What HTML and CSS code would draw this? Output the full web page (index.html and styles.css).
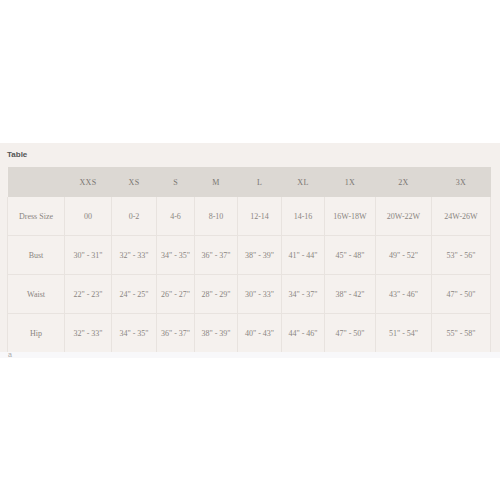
FILE: index.html
```html
<!DOCTYPE html>
<html>
<head>
<meta charset="utf-8">
<link rel="stylesheet" href="styles.css">
</head>
<body>
<div class="top"></div>
<section class="panel">
  <div class="label">Table</div>
  <table class="sizes">
    <colgroup>
      <col class="c0"><col class="c1"><col class="c2"><col class="c3"><col class="c4"><col class="c5"><col class="c6"><col class="c7"><col class="c8"><col class="c9">
    </colgroup>
    <thead>
      <tr><th></th><th>XXS</th><th>XS</th><th>S</th><th>M</th><th>L</th><th>XL</th><th>1X</th><th>2X</th><th>3X</th></tr>
    </thead>
    <tbody>
      <tr><td>Dress Size</td><td>00</td><td>0-2</td><td>4-6</td><td>8-10</td><td>12-14</td><td>14-16</td><td>16W-18W</td><td>20W-22W</td><td>24W-26W</td></tr>
      <tr><td>Bust</td><td>30" - 31"</td><td>32" - 33"</td><td>34" - 35"</td><td>36" - 37"</td><td>38" - 39"</td><td>41" - 44"</td><td>45" - 48"</td><td>49" - 52"</td><td>53" - 56"</td></tr>
      <tr><td>Waist</td><td>22" - 23"</td><td>24" - 25"</td><td>26" - 27"</td><td>28" - 29"</td><td>30" - 33"</td><td>34" - 37"</td><td>38" - 42"</td><td>43" - 46"</td><td>47" - 50"</td></tr>
      <tr><td>Hip</td><td>32" - 33"</td><td>34" - 35"</td><td>36" - 37"</td><td>38" - 39"</td><td>40" - 43"</td><td>44" - 46"</td><td>47" - 50"</td><td>51" - 54"</td><td>55" - 58"</td></tr>
    </tbody>
  </table>
</section>
<div class="after">a</div>
</body>
</html>
```

FILE: styles.css
```css
html, body {
  margin: 0;
  padding: 0;
  background: #ffffff;
}
.top {
  height: 143px;
}
.panel {
  background: #f4f0ed;
  padding: 7px 10px 1px 7px;
  height: 201px;
}
.label {
  font-family: "Liberation Sans", Arial, sans-serif;
  font-weight: bold;
  font-size: 8px;
  color: #555;
  line-height: 10px;
  margin-bottom: 7px;
}
.sizes {
  border-collapse: collapse;
  table-layout: fixed;
  width: 483px;
  font-family: "Liberation Serif", "Times New Roman", serif;
  font-size: 8px;
  color: #8a8581;
  background: #f5f1ee;
}
.c0 { width: 57px; }
.c1 { width: 47px; }
.c2 { width: 45px; }
.c3 { width: 38px; }
.c4 { width: 43px; }
.c5 { width: 44px; }
.c6 { width: 43px; }
.c7 { width: 51px; }
.c8 { width: 56px; }
.c9 { width: 59px; }
.sizes th {
  background: #dcd8d3;
  height: 30px;
  padding: 0;
  font-weight: normal;
  color: #7a7672;
  letter-spacing: 0.3px;
  text-align: center;
}
.sizes td {
  height: 38px;
  padding: 0;
  text-align: center;
  border: 1px solid #e8e3df;
  white-space: nowrap;
}
.sizes tbody tr:first-child td {
  border-top: none;
}
.after {
  font-family: "Liberation Sans", Arial, sans-serif;
  font-size: 7px;
  color: #aaa;
  background: #f8f8fa;
  padding-left: 8px;
  height: 6px;
  line-height: 6px;
  overflow: hidden;
}
```
